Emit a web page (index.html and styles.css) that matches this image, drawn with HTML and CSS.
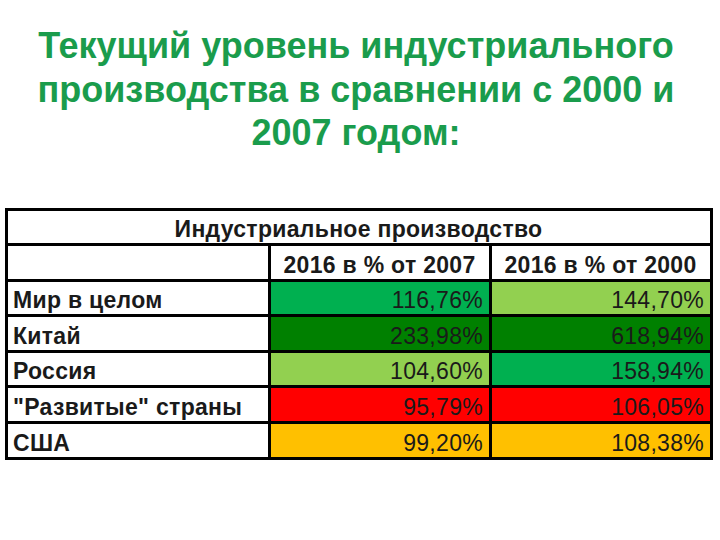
FILE: index.html
```html
<!DOCTYPE html>
<html lang="ru">
<head>
<meta charset="utf-8">
<title>Индустриальное производство</title>
<link rel="stylesheet" href="styles.css">
</head>
<body>
<h1 class="title">Текущий уровень индустриального производства в сравнении с 2000 и 2007 годом:</h1>
<table class="sheet">
  <colgroup>
    <col class="c-name">
    <col class="c-val">
    <col class="c-val">
  </colgroup>
  <tr class="r-h1"><td class="caption" colspan="3">Индустриальное производство</td></tr>
  <tr class="r-h2"><td></td><td class="head">2016 в % от 2007</td><td class="head">2016 в % от 2000</td></tr>
  <tr class="r-a"><td class="name">Мир в целом</td><td class="val g-mid">116,76%</td><td class="val g-light">144,70%</td></tr>
  <tr class="r-b"><td class="name">Китай</td><td class="val g-dark">233,98%</td><td class="val g-dark">618,94%</td></tr>
  <tr class="r-c"><td class="name">Россия</td><td class="val g-light">104,60%</td><td class="val g-mid">158,94%</td></tr>
  <tr class="r-d"><td class="name">"Развитые" страны</td><td class="val red">95,79%</td><td class="val red">106,05%</td></tr>
  <tr class="r-e"><td class="name">США</td><td class="val amber">99,20%</td><td class="val amber">108,38%</td></tr>
</table>
</body>
</html>
```
FILE: styles.css
```css
html, body {
  margin: 0;
  padding: 0;
  background: #ffffff;
}
body {
  width: 720px;
  height: 540px;
  overflow: hidden;
  font-family: "Liberation Sans", Arial, sans-serif;
}
.title {
  margin: 24px 0 0 0;
  padding: 0 22px 0 14px;
  font-size: 36px;
  line-height: 43.5px;
  font-weight: bold;
  color: #1a9c4c;
  text-align: center;
}
.sheet {
  margin: 53px 0 0 5px;
  width: 708px;
  border-collapse: collapse;
  table-layout: fixed;
  font-size: 23px;
  color: #1a1a1a;
}
.c-name { width: 263px; }
.c-val { width: 221px; }
.sheet td {
  border: 3px solid #000;
  padding: 0 6px 1px 5px;
  vertical-align: bottom;
  line-height: 26px;
  white-space: nowrap;
  overflow: hidden;
  letter-spacing: 0.3px;
}
.sheet tr { height: 35.6px; }
.r-h1 { height: 35px; }
.r-h2 { height: 37px; }
.caption {
  text-align: center;
  font-weight: bold;
  letter-spacing: 0;
}
.head {
  text-align: center;
  font-weight: bold;
  letter-spacing: 0.5px;
  padding-left: 2px;
  padding-right: 2px;
}
.name { font-weight: bold; }
.val { text-align: right; }
.g-mid { background: #00b050; }
.g-light { background: #92d050; }
.g-dark { background: #008000; }
.red { background: #ff0000; }
.amber { background: #ffc000; }
```
